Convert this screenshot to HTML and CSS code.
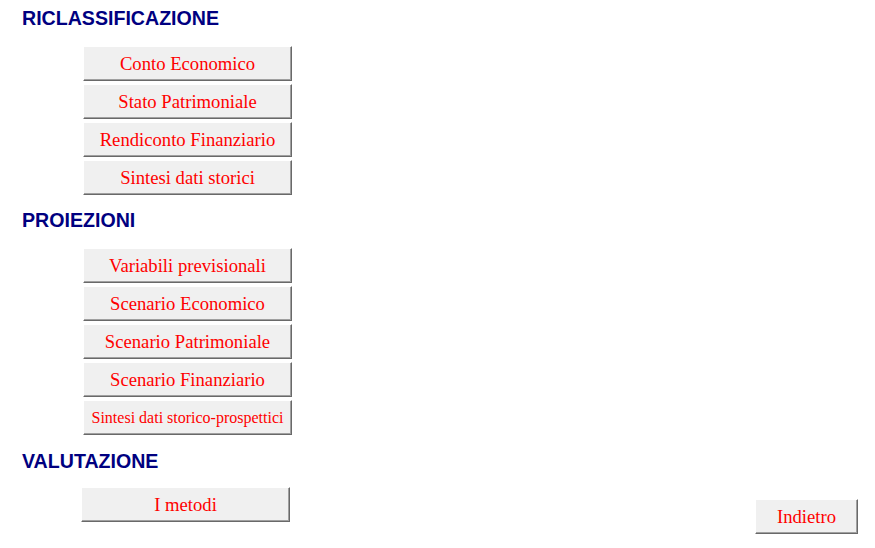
FILE: index.html
```html
<!DOCTYPE html>
<html lang="it">
<head>
  <meta charset="UTF-8" />
  <title>Analisi di bilancio</title>
  <link rel="stylesheet" href="styles.css">
</head>
<body>
  <div class="menu">
    <div class="section">
      <h2>RICLASSIFICAZIONE</h2>
      <div class="buttons">
        <button class="btn">Conto Economico</button>
        <button class="btn">Stato Patrimoniale</button>
        <button class="btn">Rendiconto Finanziario</button>
        <button class="btn">Sintesi dati storici</button>
      </div>
    </div>

    <div class="section">
      <h2>PROIEZIONI</h2>
      <div class="buttons">
        <button class="btn">Variabili previsionali</button>
        <button class="btn">Scenario Economico</button>
        <button class="btn">Scenario Patrimoniale</button>
        <button class="btn">Scenario Finanziario</button>
        <button class="btn btn--small">Sintesi dati storico-prospettici</button>
      </div>
    </div>

    <!-- last group shares its row with the back button -->
    <div class="last-row">
      <div class="section section--last">
        <h2>VALUTAZIONE</h2>
        <div class="buttons buttons--shift">
          <button class="btn">I metodi</button>
        </div>
      </div>
      <button class="btn btn--back">Indietro</button>
    </div>
  </div>
</body>
</html>
```

FILE: styles.css
```css
body {
  margin: 0;
  background: #ffffff;
}

.menu {
  padding: 7px 17px 0 22px;
}

.section + .section {
  margin-top: 14px;
}

.last-row {
  margin-top: 15px;
}

.section h2 {
  margin: 0 0 17px;
  font-family: "Liberation Sans", Arial, sans-serif;
  font-size: 19.6px;
  line-height: 22px;
  font-weight: bold;
  color: #000080;
}

.section--last h2 {
  margin-bottom: 15px;
}

.section--last {
  padding-bottom: 12px;
}

.buttons {
  display: flex;
  flex-direction: column;
  gap: 3px;
  padding-left: 61px;
}

.buttons--shift {
  padding-left: 59px;
}

/* old-style raised button: white top/left, two-tone grey bottom/right */
.btn {
  box-sizing: border-box;
  width: 209px;
  height: 35px;
  padding: 0;
  background: #f0f0f0;
  border: 0;
  border-top: 1px solid #ffffff;
  border-left: 1px solid #ffffff;
  border-right: 1px solid #696969;
  border-bottom: 1px solid #696969;
  box-shadow: inset -1px -1px 0 #a0a0a0;
  font-family: "Liberation Serif", "Times New Roman", serif;
  font-size: 18.67px;
  color: #ff0000;
  text-align: center;
  cursor: pointer;
}

.btn--small {
  font-size: 16px;
}

.last-row {
  display: flex;
  justify-content: space-between;
  align-items: flex-end;
}

.btn--back {
  width: 103px;
}
```
